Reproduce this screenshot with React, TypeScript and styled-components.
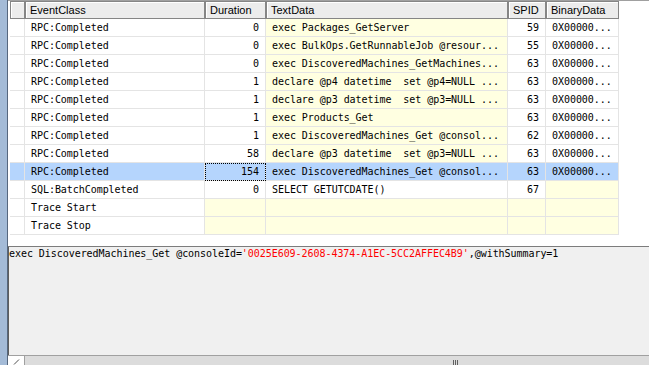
import React from 'react';
import styled, { createGlobalStyle } from 'styled-components';

const GlobalStyle = createGlobalStyle`
  html, body {
    margin: 0;
    padding: 0;
    background: #ffffff;
    overflow: hidden;
  }
`;

const COLS = '15px 180px 61px 242px 38px 73px';

const Window = styled.div`
  display: flex;
  width: 649px;
  height: 365px;
  overflow: hidden;
`;

const LeftStrip = styled.div`
  width: 7px;
  flex-shrink: 0;
  background: #a4bbd7;
  border-right: 1px solid #56677e;
`;

const Main = styled.div`
  flex: 1;
  display: flex;
  flex-direction: column;
  min-width: 0;
`;

const GridArea = styled.div`
  height: 246px;
  box-sizing: border-box;
  border-top: 1px solid #a0a0a0;
  padding-left: 2px;
  background: #ffffff;
  flex-shrink: 0;
`;

const HeaderRow = styled.div`
  display: grid;
  grid-template-columns: ${COLS};
  height: 18px;
`;

const HeaderCell = styled.div`
  box-sizing: border-box;
  border: 1px solid #858585;
  box-shadow: inset 1px 1px 0 #ffffff;
  background: #ececec;
  font-family: "Liberation Sans", Arial, sans-serif;
  font-size: 11px;
  line-height: 16px;
  color: #000;
  padding-left: 4px;
  white-space: nowrap;
  overflow: hidden;
`;

const Row = styled.div`
  display: grid;
  grid-template-columns: ${COLS};
  height: 18px;
`;

const Cell = styled.div<{ $right?: boolean; $hl?: boolean; $sel?: boolean; $focus?: boolean }>`
  box-sizing: border-box;
  border-right: 1px solid #e4e4e4;
  border-bottom: 1px solid #e4e4e4;
  background: ${(p) => (p.$sel ? '#b5d5fd' : p.$hl ? '#ffffe1' : '#ffffff')};
  font-family: "DejaVu Sans Mono", "Liberation Mono", monospace;
  font-size: 10px;
  letter-spacing: -0.05px;
  line-height: 17px;
  color: #000;
  white-space: pre;
  overflow: hidden;
  text-align: ${(p) => (p.$right ? 'right' : 'left')};
  padding: ${(p) => (p.$right ? '0 6px 0 0' : '0 0 0 6px')};
  ${(p) => p.$focus && 'outline: 1px dotted #000; outline-offset: -1px;'}
`;

const Splitter = styled.div`
  height: 1px;
  background: #7c7c7c;
  flex-shrink: 0;
`;

const DetailPanel = styled.div`
  flex: 1;
  background: #f0f0f0;
  border-left: 1px solid #5e5e5e;
  font-family: "DejaVu Sans Mono", "Liberation Mono", monospace;
  font-size: 10px;
  letter-spacing: -0.05px;
  line-height: 13px;
  color: #000;
  white-space: pre;
  overflow: hidden;
`;

const Str = styled.span`
  color: #ff0000;
`;

const BottomBar = styled.div`
  display: flex;
  height: 9px;
  flex-shrink: 0;
  border-top: 1px solid #a0a0a0;
  background: #dcdcdc;
`;

const GripBox = styled.div`
  width: 17px;
  background: #ffffff;
  border-right: 1px solid #a0a0a0;
  display: flex;
  justify-content: center;
  padding-top: 3px;
  box-sizing: border-box;
`;

const Track = styled.div`
  flex: 1;
  display: flex;
  padding-left: 428px;
  padding-top: 4px;
  box-sizing: border-box;
  gap: 1px;
`;

const GripLine = styled.div`
  width: 1px;
  height: 6px;
  background: #606060;
`;

type RowData = {
  ev: string;
  dur: string;
  text: string;
  spid: string;
  bin: string;
  hl: string[];
  sel?: boolean;
};

const rows: RowData[] = [
  { ev: 'RPC:Completed', dur: '0', text: 'exec Packages_GetServer', spid: '59', bin: '0X00000...', hl: ['text'] },
  { ev: 'RPC:Completed', dur: '0', text: 'exec BulkOps.GetRunnableJob @resour...', spid: '55', bin: '0X00000...', hl: ['text'] },
  { ev: 'RPC:Completed', dur: '0', text: 'exec DiscoveredMachines_GetMachines...', spid: '63', bin: '0X00000...', hl: ['text'] },
  { ev: 'RPC:Completed', dur: '1', text: 'declare @p4 datetime  set @p4=NULL ...', spid: '63', bin: '0X00000...', hl: ['text'] },
  { ev: 'RPC:Completed', dur: '1', text: 'declare @p3 datetime  set @p3=NULL ...', spid: '63', bin: '0X00000...', hl: ['text'] },
  { ev: 'RPC:Completed', dur: '1', text: 'exec Products_Get', spid: '63', bin: '0X00000...', hl: ['text'] },
  { ev: 'RPC:Completed', dur: '1', text: 'exec DiscoveredMachines_Get @consol...', spid: '62', bin: '0X00000...', hl: ['text'] },
  { ev: 'RPC:Completed', dur: '58', text: 'declare @p3 datetime  set @p3=NULL ...', spid: '63', bin: '0X00000...', hl: ['text'] },
  { ev: 'RPC:Completed', dur: '154', text: 'exec DiscoveredMachines_Get @consol...', spid: '63', bin: '0X00000...', hl: [], sel: true },
  { ev: 'SQL:BatchCompleted', dur: '0', text: 'SELECT GETUTCDATE()', spid: '67', bin: '', hl: ['bin'] },
  { ev: 'Trace Start', dur: '', text: '', spid: '', bin: '', hl: ['dur', 'text', 'spid', 'bin'] },
  { ev: 'Trace Stop', dur: '', text: '', spid: '', bin: '', hl: ['dur', 'text', 'spid', 'bin'] },
];

export default function App() {
  return (
    <>
      <GlobalStyle />
      <Window>
        <LeftStrip />
        <Main>
          <GridArea>
            <HeaderRow>
              <HeaderCell />
              <HeaderCell>EventClass</HeaderCell>
              <HeaderCell>Duration</HeaderCell>
              <HeaderCell>TextData</HeaderCell>
              <HeaderCell>SPID</HeaderCell>
              <HeaderCell>BinaryData</HeaderCell>
            </HeaderRow>
            {rows.map((r, i) => (
              <Row key={i}>
                <Cell $sel={r.sel} />
                <Cell $sel={r.sel}>{r.ev}</Cell>
                <Cell $right $sel={r.sel} $focus={r.sel} $hl={r.hl.includes('dur')}>{r.dur}</Cell>
                <Cell $sel={r.sel} $hl={r.hl.includes('text')}>{r.text}</Cell>
                <Cell $right $sel={r.sel} $hl={r.hl.includes('spid')}>{r.spid}</Cell>
                <Cell $sel={r.sel} $hl={r.hl.includes('bin')}>{r.bin}</Cell>
              </Row>
            ))}
          </GridArea>
          <Splitter />
          <DetailPanel>
            exec DiscoveredMachines_Get @consoleId=<Str>'0025E609-2608-4374-A1EC-5CC2AFFEC4B9'</Str>,@withSummary=1
          </DetailPanel>
          <BottomBar>
            <GripBox>
              <svg width="7" height="6" viewBox="0 0 7 6">
                <path d="M1 5.5 L6 0.5" stroke="#505050" strokeWidth="1" />
              </svg>
            </GripBox>
            <Track>
              <GripLine />
              <GripLine />
              <GripLine />
            </Track>
          </BottomBar>
        </Main>
      </Window>
    </>
  );
}
